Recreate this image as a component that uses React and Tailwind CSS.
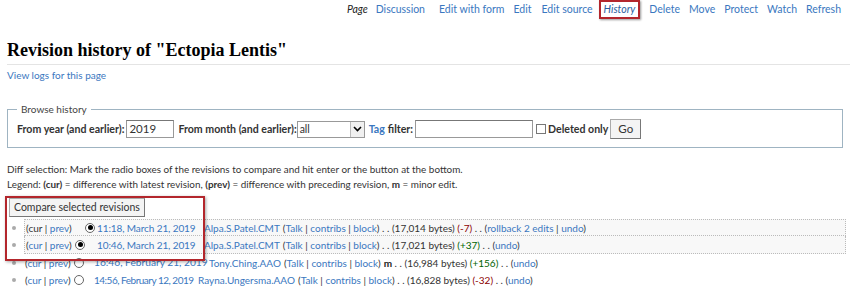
const font = { fontFamily: 'Lato, "Liberation Sans", sans-serif' };

const nav = [
  ['Discussion', 'ml-[8px]'],
  ['Edit with form', 'ml-[14px]'],
  ['Edit', 'ml-[9px]'],
  ['Edit source', 'ml-[10px]'],
];
const nav2 = ['Delete', 'Move', 'Protect', 'Watch', 'Refresh'];

const rows = [
  { r1: 'hidden', r2: 'checked', date: '11:18, March 21, 2019', dateCls: 'ml-[2px] w-[107px] text-[10px] tracking-[-0.1px]', user: 'Alpa.S.Patel.CMT', bytes: '17,014', diff: '-7', extra: 'rollback', boxed: true },
  { r1: 'checked', r2: 'none', date: '10:46, March 21, 2019', dateCls: 'ml-[2px] w-[107px] text-[10px] tracking-[-0.1px]', user: 'Alpa.S.Patel.CMT', bytes: '17,021', diff: '+37', boxed: true },
  { r1: 'empty', r2: 'none', date: '16:46, February 21, 2019', dateCls: 'w-[115px] text-[10.2px]', user: 'Tony.Ching.AAO', bytes: '16,984', diff: '+156', minor: true },
  { r1: 'empty', r2: 'none', date: '14:56, February 12, 2019', dateCls: 'w-[104px] text-[10px] tracking-[-0.5px]', user: 'Rayna.Ungersma.AAO', bytes: '16,828', diff: '-32' },
];

function Radio({ state }) {
  if (state === 'none' || state === 'hidden') return <span className="inline-block w-[10px] h-[10px]" />;
  return (
    <span className="inline-flex items-center justify-center w-[10px] h-[10px] rounded-full border border-[#666] bg-white">
      {state === 'checked' && <span className="w-[5px] h-[5px] rounded-full bg-black" />}
    </span>
  );
}

function A({ children, className = '' }) {
  return <span className={'text-[#3a77c0] ' + className}>{children}</span>;
}

export default function App() {
  return (
    <div className="relative w-[850px] h-[289px] bg-white text-[#333] overflow-hidden text-[10px] leading-none" style={font}>
      {/* Tabs */}
      <div className="flex justify-end items-center h-[19px] pr-[9px] text-[10.5px]">
        <span className="italic text-[#222]">Page</span>
        {nav.map(([n, c]) => (
          <A key={n} className={c}>{n}</A>
        ))}
        <span className="ml-[6px] italic text-[#2a5ea0] px-[3px] py-[2px] border-2 border-[#b3262c] shadow-[1px_1px_2px_rgba(0,0,0,0.4)]">History</span>
        {nav2.map((n) => (
          <A key={n} className="ml-[9px]">{n}</A>
        ))}
      </div>

      {/* Title */}
      <div className="pl-[7px] pt-[22px]">
        <h1 className="text-[18px] font-bold text-black pb-[5px] border-b border-[#e4e4e4]" style={{ fontFamily: '"Liberation Serif", serif' }}>
          Revision history of "Ectopia Lentis"
        </h1>
        <div className="mt-[5px]">
          <A>View logs for this page</A>
        </div>
      </div>

      {/* Browse history */}
      <fieldset className="mx-[7px] mt-[24px] h-[44px] border border-[#9fb4c2] px-[9px] pt-[5px]">
        <legend className="px-[4px] text-[#444]">Browse history</legend>
        <div className="flex items-center font-bold text-[10.6px] text-[#333]">
          <span>From year (and earlier):</span>
          <span className="ml-[2px] w-[48px] h-[18px] border border-[#999] border-t-[#777] font-normal text-[11.5px] px-[2px] flex items-center">2019</span>
          <span className="ml-[4px]">From month (and earlier):</span>
          <span className="w-[68px] h-[17px] border border-[#999] font-normal text-[10.5px] flex items-center justify-between pl-[2px]">
            all
            <span className="w-[14px] h-[15px] border-l border-[#bbb] flex items-center justify-center bg-[#f0f0f0]">
              <svg width="9" height="6" viewBox="0 0 9 6"><path d="M1 1l3.5 3.5L8 1" stroke="#000" strokeWidth="1.6" fill="none" /></svg>
            </span>
          </span>
          <A className="ml-[4px]">Tag</A>
          <span className="ml-[3px]">filter:</span>
          <span className="ml-[2px] w-[118px] h-[18px] border border-[#999] border-t-[#777]" />
          <span className="ml-[3px] w-[10px] h-[10px] border border-[#777] bg-white" />
          <span className="ml-[2px]">Deleted only</span>
          <span className="ml-[2px] h-[20px] px-[7px] border border-[#aaa] border-b-[#777] border-r-[#777] bg-[#f4f4f4] font-normal text-[11.5px] flex items-center">Go</span>
        </div>
      </fieldset>

      {/* Diff help */}
      <div className="pl-[7px] mt-[17px] text-[#333] text-[9.9px]">
        <div>Diff selection: Mark the radio boxes of the revisions to compare and hit enter or the button at the bottom.</div>
        <div className="mt-[5px]">
          Legend: <b>(cur)</b> = difference with latest revision, <b>(prev)</b> = difference with preceding revision, <b>m</b> = minor edit.
        </div>
      </div>

      {/* Compare + list */}
      <div className="pl-[9px] mt-[8px]">
        <span className="inline-flex items-center h-[19px] px-[4px] border border-[#aaa] border-b-[#777] border-r-[#777] bg-[#f4f4f4] text-[#333] text-[10.5px]">Compare selected revisions</span>
      </div>
      <ul className="mt-[2px] mr-[4px]">
        {rows.map((r, i) => (
          <li key={i} className="flex items-center h-[17.5px]">
            <span className="w-[4px] h-[4px] rounded-full bg-[#aaa] ml-[12px] mr-[8px]" />
            <div className={'flex items-center flex-1 h-full pl-[1px] ' + (r.boxed ? 'border border-dotted border-[#bbb] bg-[#f8f8f8] ' + (i === 1 ? 'border-t-0' : '') : '')}>
              <span className="w-[49px] shrink-0 whitespace-nowrap">
                ({i === 0 ? 'cur' : <A>cur</A>} | <A>prev</A>)
              </span>
              <Radio state={r.r1} />
              <Radio state={r.r2} />
              <A className={'shrink-0 whitespace-nowrap ' + r.dateCls}>{r.date}</A>
              <A>{r.user}</A>
              <span className="ml-[3px] whitespace-nowrap">
                (<A>Talk</A> | <A>contribs</A> | <A>block</A>)
                {r.minor && <b className="ml-[3px] text-[#222]">m</b>}
                {' '}. . ({r.bytes} bytes){' '}
                <span className={r.diff.startsWith('-') ? 'text-[#8b0000]' : 'text-[#006400]'}>({r.diff})</span>{' '}
                . . ({r.extra ? <><A>rollback 2 edits</A> | </> : null}<A>undo</A>)
              </span>
            </div>
          </li>
        ))}
      </ul>

      {/* Annotation box */}
      <div className="absolute left-[5px] top-[196px] w-[200px] h-[65px] border-2 border-[#b3262c] shadow-[1px_1px_3px_rgba(0,0,0,0.35)] pointer-events-none" />
    </div>
  );
}
